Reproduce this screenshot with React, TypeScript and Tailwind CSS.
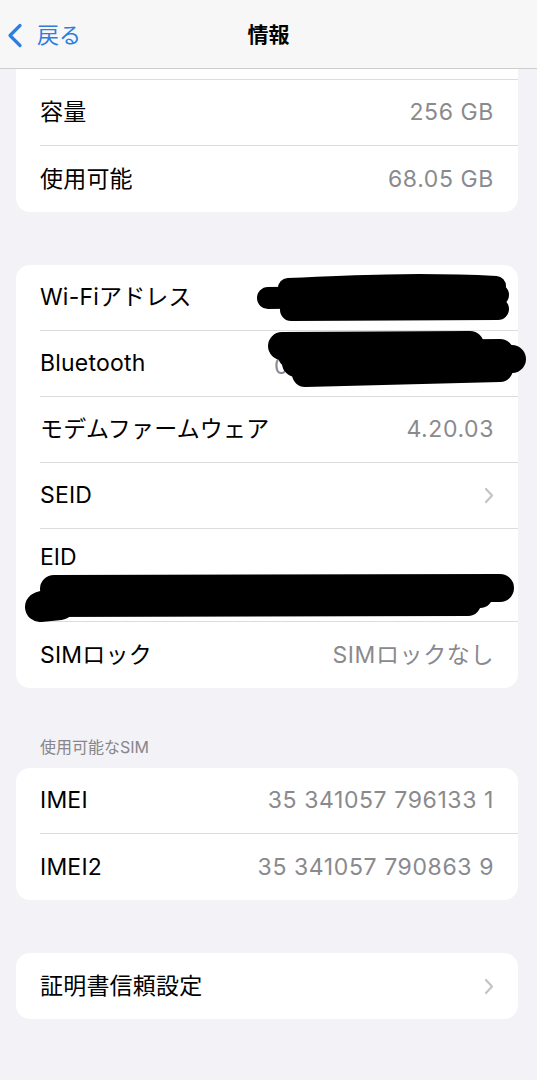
import type { ReactNode } from 'react'

const font = { fontFamily: 'Inter, "Noto Sans CJK JP", sans-serif' }

function Chevron() {
  return (
    <svg width="10" height="17" viewBox="0 0 10 17" fill="none" className="shrink-0">
      <path d="M2 2l6 6.5L2 15" stroke="#c4c4c7" strokeWidth="2.2" strokeLinecap="round" strokeLinejoin="round" />
    </svg>
  )
}

interface RowProps {
  label: string
  value?: string
  chevron?: boolean
  last?: boolean
  children?: ReactNode
}

function Row({ label, value, chevron, last, children }: RowProps) {
  return (
    <div className="relative pl-6">
      <div className={`flex h-[66px] items-center justify-between pr-6 ${last ? '' : 'border-b border-[#dcdcdf]'}`}>
        <span className="text-[23px] tracking-[0.2px] text-black">{label}</span>
        {value && <span className="text-[23px] tracking-[0.6px] text-[#8a8a8e]">{value}</span>}
        {chevron && <Chevron />}
      </div>
      {children}
    </div>
  )
}

function Card({ children }: { children: ReactNode }) {
  return <div className="relative mx-4 w-[502px] rounded-[14px] bg-white">{children}</div>
}

export default function App() {
  return (
    <div className="min-h-[1080px] w-[537px] bg-[#f2f2f7]" style={font}>
      <div className="relative flex h-[69px] items-center border-b border-[#cdcdd0] bg-[#f7f7f7] pt-[3px]">
        <div className="flex items-center gap-[14px] pl-[7px]">
          <svg width="16" height="25" viewBox="0 0 16 25" fill="none">
            <path d="M13 2.5L3 12.5l10 10" stroke="#2f7de1" strokeWidth="3.2" strokeLinecap="round" strokeLinejoin="round" />
          </svg>
          <span className="text-[22px] text-[#2f7de1]">戻る</span>
        </div>
        <span className="absolute left-1/2 top-[19px] -translate-x-1/2 text-[21px] font-bold text-black">情報</span>
      </div>

      <div className="mx-4 h-[11px] w-[502px] bg-white pl-6">
        <div className="h-full border-b border-[#dcdcdf]" />
      </div>
      <div className="mx-4 w-[502px] rounded-b-[14px] bg-white">
        <Row label="容量" value="256 GB" />
        <Row label="使用可能" value="68.05 GB" last />
      </div>

      <div className="h-[53px]" />

      <Card>
        <Row label="Wi-Fiアドレス">
          <svg className="absolute left-[222px] top-0" width="280" height="66" viewBox="238 264 280 66" fill="none">
            <g stroke="#000" strokeLinecap="round">
              <path d="M268 297 L498 294" strokeWidth="22" />
              <path d="M288 287 C350 284 420 281 496 285" strokeWidth="20" />
              <path d="M291 309 L498 308" strokeWidth="22" />
            </g>
          </svg>
        </Row>
        <Row label="Bluetooth">
          <span className="absolute left-[258px] top-[18px] text-[23px] text-[#8a8a8e]">0</span>
          <svg className="absolute left-[222px] top-0" width="300" height="66" viewBox="238 330 300 66" fill="none">
            <g stroke="#000" strokeLinecap="round">
              <path d="M282 345 L470 344" strokeWidth="28" />
              <path d="M292 354 L500 352" strokeWidth="28" />
              <path d="M296 362 L512 358" strokeWidth="28" />
              <path d="M305 373 L500 368" strokeWidth="26" />
            </g>
          </svg>
        </Row>
        <Row label="モデムファームウェア" value="4.20.03" />
        <Row label="SEID" chevron />
        <div className="relative pl-6">
          <div className="h-[93px] border-b border-[#dcdcdf] pt-[12px]">
            <span className="text-[23px] leading-[32px] text-black">EID</span>
            <div className="mt-[14px] h-[8px] w-[6px] rounded-full bg-[#b5b5b8]" />
          </div>
          <svg className="absolute left-0 top-0" width="502" height="93" viewBox="16 528 502 93" fill="none">
            <g stroke="#000" strokeLinecap="round">
              <path d="M54 588 L500 587" strokeWidth="28" />
              <path d="M60 596 L480 594" strokeWidth="26" />
              <path d="M42 603 L468 602" strokeWidth="26" />
              <path d="M40 606 L60 604" strokeWidth="30" />
            </g>
          </svg>
        </div>
        <Row label="SIMロック" value="SIMロックなし" last />
      </Card>

      <div className="px-10 pt-[48px] pb-[10px] text-[16px] leading-[22px] text-[#86868b]">使用可能なSIM</div>

      <Card>
        <Row label="IMEI" value="35 341057 796133 1" />
        <Row label="IMEI2" value="35 341057 790863 9" last />
      </Card>

      <div className="h-[53px]" />

      <Card>
        <Row label="証明書信頼設定" chevron last />
      </Card>
    </div>
  )
}
